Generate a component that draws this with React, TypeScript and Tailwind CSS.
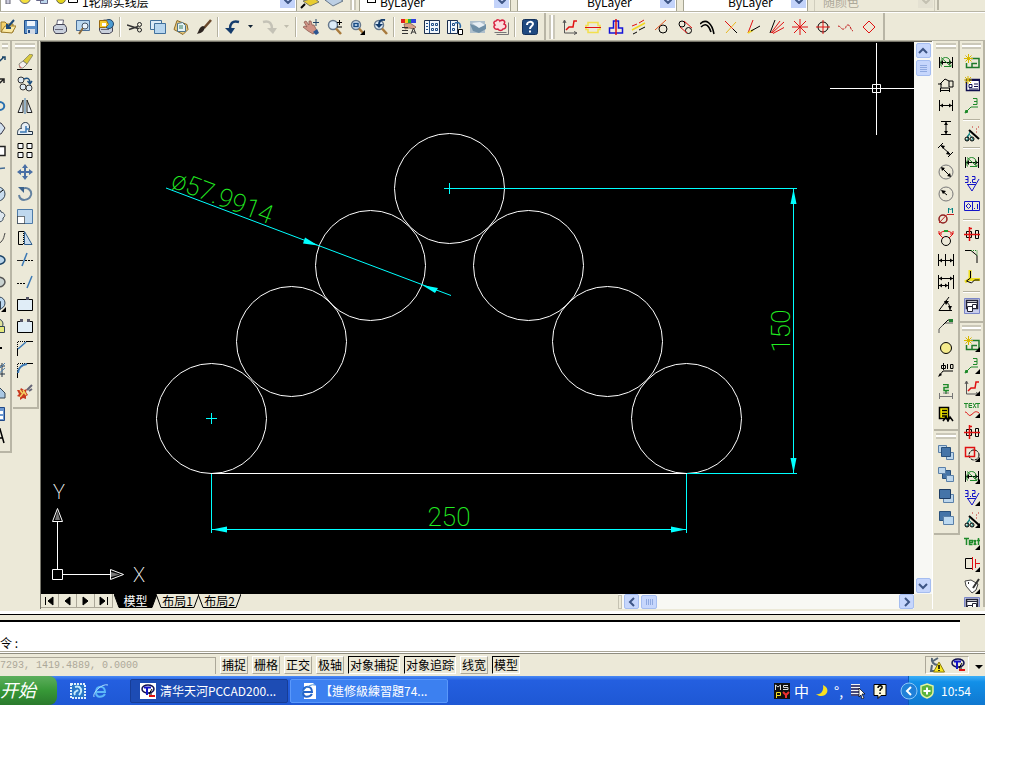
import type { ReactNode } from "react";
import clsx from "clsx";

type PathProps = { d: string; c?: string; f?: string; w?: number; dash?: string };

const P = ({ d, c = "#000", f = "none", w = 1, dash }: PathProps) => (
  <path d={d} stroke={c} fill={f} strokeWidth={w} strokeDasharray={dash} />
);

const CORNER = <path d="M16 11v5h-5z" fill="#000" />;

const DIM_GREEN = (
  <>
    <P d="M1.500 3v11M14.500 3v11M2 8.500h12" />
    <path d="M5 6L2 8.500 5 11zM11 6l3 2.500-3 2.500z" />
    <P d="M3.500 12.500c-2-4 0-9 4-9s6 4 3 7M6 12.500h7v-2M3 3.500l10 9" c="#1e8a2a" />
  </>
);
const ROUGHNESS = (
  <>
    <P d="M3 8.500h9M4 9l4 6 7-12" c="#1414c8" />
    <P d="M1 .5h3v6H1M1.500 3.500H4M6 6.500h1M8 .5h3v3H8.500v3H12" c="#1414c8" />
  </>
);
const WAND = (
  <>
    <P d="M5 4l10 9" w={2} />
    <P d="M6 6l-3 6M5 8l4 5M4 9v6" c="#007a7a" />
    <P d="M1 14h3M7 14h3" c="#007a7a" />
    <P d="M8 1h1M12 3h1M14 1h1M12 6h1" c="#c02020" />
    <circle cx="3" cy="13" r="2" fill="none" stroke="#000" />
    <circle cx="8" cy="13" r="2" fill="none" stroke="#000" />
  </>
);
const BOLT = (
  <>
    <P d="M2.500 5.500h5v6h-5zM11.500 4.500h3v8h-3z" />
    <P d="M0 8.500h16M5.500 1v14M8 2.500H5.500" c="#e01010" w={1.500} />
  </>
);
const LEADER3 = (
  <>
    <P d="M2 14l5-5h7" c="#1e8a2a" />
    <P d="M1 15l3-1-2-2z" f="#1e8a2a" c="#1e8a2a" />
    <P d="M9 .5h4v6H9M10 3.500h3" c="#1e8a2a" />
  </>
);
const NEW_VIEW = (
  <>
    <P d="M7 4.500h8v9H2.500V9M8 13V9.500h5" c="#1e7a2a" w={1.500} />
    <P d="M4.500 0v9M0 4.500h9M1.500 1.500l6 6M7.500 1.500l-6 6" c="#d8b800" />
  </>
);
const AXIS_CURVE = (
  <>
    <P d="M2.500 2v12h12M1 4l1.500-3L4 4M12 12.500l3 1.500-3 1.500" c="#555" />
    <P d="M4 11l3-3h4l1-6h3" c="#e01010" w={1.500} />
  </>
);
const GRID_BOX = (
  <>
    <P d="M0.500 0.500h15v15H.5z" c="#7a86c8" f="#c8cdec" />
    <P d="M2.500 2.500h11v8h-11z" w={1.500} c="#223" f="#fff" />
    <P d="M3 4.500h10" c="#223" />
    <P d="M3.500 8.500h5v5h-5zM8.500 6.500h4v4h-4z" f="#fff" c="#223" />
  </>
);
const MAGNIFIER = (
  <>
    <circle cx="7" cy="6" r="4.500" fill="#dcebf7" stroke="#66788c" strokeWidth="1.500" />
    <P d="M10 9.500l5 5.500" c="#a87a3c" w={2.500} />
  </>
);
const PRINTER = (
  <>
    <P d="M4.500 7l1-6h6l-1 6" f="#fff" c="#667" />
    <P d="M1.500 7.500l3-2h8l2 3v4l-3 2h-8l-2-3z" f="#c9d0dc" c="#445" />
    <P d="M3 10.500h8" c="#667" />
  </>
);

const icons: Record<string, ReactNode> = {
  Open: (
    <>
      <P d="M1 13V3h4l2 2h6v8z" f="#f3d16b" c="#9a7a2a" />
      <P d="M1 13l4-6h11l-4 7z" f="#fbe9a4" c="#9a7a2a" />
      <P d="M14 1L7 9m0-4v4h4" c="#1c4a7a" w={2} />
    </>
  ),
  Save: (
    <>
      <P d="M1.500 1.500h13v13h-13z" f="#5b8fc8" c="#1f4c86" />
      <path d="M4 2h8v5H4z" fill="#eef5fc" />
      <path d="M4 10h8v5H4z" fill="#d2dbe6" />
      <path d="M5 11h2v3H5z" fill="#1f4c86" />
    </>
  ),
  Plot: PRINTER,
  "Plot Preview": (
    <>
      <P d="M1.500 1.500h13v10h-13z" f="#b9d7ee" c="#4a6f98" />
      <circle cx="10" cy="7" r="3" fill="#e8f3fb" stroke="#456" />
      <P d="M8 9l-4 6" c="#8a6a3c" w={2} />
    </>
  ),
  Publish: (
    <>
      {PRINTER}
      <circle cx="11" cy="5" r="4.500" fill="#4c9bd0" stroke="#246" />
      <P d="M1.500 1.500h7l2 4-3 3h-6z" f="#f5c92c" c="#9a6a10" />
      <path d="M4 4h4v3H4z" fill="#fff" />
    </>
  ),
  Cut: (
    <>
      <P d="M0 6l11 3.500M2 10.500l9-3" w={1.500} c="#333" />
      <circle cx="12.500" cy="5.500" r="2" fill="none" stroke="#222" />
      <circle cx="12.500" cy="11" r="2" fill="none" stroke="#222" />
    </>
  ),
  Copy: (
    <>
      <P d="M.5 1.500h11v9H.5z" f="#dcebf7" c="#41719c" />
      <P d="M4.500 4.500h11v10h-11z" f="#b7d6ef" c="#41719c" />
    </>
  ),
  Paste: (
    <>
      <P d="M4 1.500l10 4 1 5-5 5-9-5z" f="#e8c87a" c="#8a6a2a" />
      <P d="M4.500 4.500l5-1 3 3v6h-8z" f="#e5f2f5" c="#4f7388" />
      <P d="M6 7h4M6 9h4" c="#3a8060" />
    </>
  ),
  "Match Properties": (
    <>
      <P d="M15 1L8 9" c="#6b4a2c" w={2.500} />
      <path d="M9 8c-1 5-4 6-8 7 2-3 2-7 6-8z" fill="#2c2420" />
    </>
  ),
  Undo: (
    <>
      <P d="M14 3C7 1 5 5 5 10" c="#143c6c" w={2.500} />
      <path d="M0 9h10l-4 6z" fill="#143c6c" />
    </>
  ),
  Redo: (
    <>
      <P d="M2 3c7-2 9 2 9 7" c="#c4c2b6" w={2.500} />
      <path d="M6 9h10l-4 6z" fill="#c4c2b6" />
    </>
  ),
  Pan: (
    <>
      <path d="M1 3l2-1 3 4V2l2 0 1 4 2 0 3 6-4 3-5-3-5-4 2-1 2 1z" fill="#cf9284" stroke="#825248" strokeWidth=".7" />
      <path d="M10 13l4-3 2 4-3 2z" fill="#2c5590" />
      <P d="M13 0v7M10 3.500h6" c="#246" />
    </>
  ),
  "Zoom Realtime": (
    <>
      {MAGNIFIER}
      <P d="M13.500 1v5M11 3.500h5M11 8h5" />
    </>
  ),
  "Zoom Window": (
    <>
      {MAGNIFIER}
      <P d="M5 4.500h4v3H5z" c="#164a84" w={1.500} />
      {CORNER}
    </>
  ),
  "Zoom Previous": (
    <>
      {MAGNIFIER}
      <P d="M13 1C8 0 7 3 7 6" c="#143c6c" w={2} />
      <path d="M3 5h8L7 9z" fill="#143c6c" />
    </>
  ),
  Properties: (
    <>
      <path d="M0 0h4v4H0z" fill="#e02020" />
      <path d="M4 0h3v4H4z" fill="#f4d020" />
      <path d="M7 0h3v4H7z" fill="#20b040" />
      <path d="M10 0h5v4h-5z" fill="#3040e0" />
      <path d="M3 5l6-1 6 4-2 2-5-1-4 1z" fill="#d8a088" stroke="#604030" strokeWidth=".6" />
      <P d="M1 8.500h6M1 11.500h6M1 14.500h6M10 15l2.500-6 2.500 6M11 13h3" c="#333" />
    </>
  ),
  DesignCenter: (
    <>
      <P d="M.5 1.500h15v13H.5z" f="#f2f7fc" c="#1a2d4c" />
      <P d="M5.500 2v12M2 4.500h2M2 7.500h2M2 10.500h2M7.500 4.500h2v2h-2zM11.500 4.500h2v2h-2zM7.500 9.500h2v2h-2zM11.500 9.500h2v2h-2z" c="#1f4c86" />
    </>
  ),
  "Tool Palettes": (
    <>
      <P d="M.5 1.500h10v13H.5z" f="#f2f7fc" c="#1a2d4c" />
      <P d="M3.500 2v12M5.500 4.500h2v2h-2zM5.500 9.500h2v2h-2z" c="#1f4c86" />
      <P d="M8 4c5-2 6 2 5 5" c="#2a68a8" w={1.500} />
      <P d="M11.500 10.500h4v5h-4z" f="#fff" />
    </>
  ),
  "Sheet Set": (
    <>
      <path d="M0 2h15v12H0z" fill="#aebfcb" />
      <path d="M0 5l9 3 7-3v5l-7 4-6-2z" fill="#6f8fa6" />
      <path d="M2 4l8-1 5 3-6 3z" fill="#e7eef3" />
    </>
  ),
  Markup: (
    <>
      <P d="M3.500 15.500h12v-12M1.500 13.500h12" c="#777" />
      <P d="M3 2c1-2 4-1 4 0 3-2 6 0 4 3 3 1 2 5-1 5-1 2-4 2-5 0-4 1-5-3-3-4-2-2-1-4 1-4z" f="#fbdede" c="#d82040" w={1.500} />
    </>
  ),
  Help: (
    <>
      <rect x=".5" y=".5" width="15" height="15" rx="2" fill="#1f4a80" stroke="#12305a" />
      <P d="M5 6c0-4 6-4 6-1 0 2-3 2-3 5M8 11.500v2" c="#fff" w={2} />
    </>
  ),
  "Axis Curve": AXIS_CURVE,
  "Centre Line": (
    <>
      <P d="M3 3.500h10v3h2v4h-2v3H3v-3H1v-4h2z" c="#f2e04c" w={1.500} />
      <P d="M0 8.500h16" c="#e01010" />
    </>
  ),
  Symmetric: (
    <>
      <P d="M5.500 2v7h-4v5h13V9h-4V2z" c="#1414d8" w={1.500} />
      <P d="M8 0v16" c="#e01010" w={1.500} />
    </>
  ),
  Parallel: (
    <>
      <P d="M1 7l5-2M8 4l5-3" c="#e01010" />
      <P d="M1 11l13-7" c="#f0d820" w={1.500} />
      <P d="M2 15l4-2M8 11l6-3" />
    </>
  ),
  "Tangent Line": (
    <>
      <circle cx="9" cy="10" r="4" fill="none" stroke="#000" />
      <P d="M1 11L12 1" c="#e0501a" />
    </>
  ),
  "Tangent Circles": (
    <>
      <circle cx="5" cy="5" r="3" fill="none" stroke="#000" />
      <circle cx="11.500" cy="11.500" r="3" fill="none" stroke="#000" />
      <P d="M3 8l7 6M7 2l8 7" c="#e01010" />
    </>
  ),
  "Arc Offset": <P d="M0 5c6-6 12-1 14 10M1 8c5-5 8-1 10 5" w={1.500} />,
  "Break Cross": (
    <>
      <P d="M2 2l12 12" c="#e01010" />
      <P d="M13 3L3 14" c="#e8b820" />
      <P d="M10 10l4 4" />
    </>
  ),
  "Angle Bisect": (
    <>
      <P d="M7 1L2 14" c="#e01010" />
      <P d="M2 14l5-3" c="#f0d820" w={2} />
      <P d="M5 12l9-5" />
    </>
  ),
  "Angle Lines": (
    <>
      <P d="M1 14L6 1" />
      <P d="M2 14l9-12M3 14L15 3M4 14.500l11-6" c="#e01010" />
    </>
  ),
  Star: <P d="M8 0v16M0 8h16M2 2l12 12M14 2L2 14" c="#e01010" />,
  "Centre Mark": (
    <>
      <circle cx="8" cy="8" r="5" fill="none" stroke="#000" />
      <P d="M8 1v14M1 8h14" c="#e01010" />
    </>
  ),
  "Wave Break": <P d="M0 7c3 0 3 4 6 3s1-4 4-4 2 5 5 6" c="#c01818" dash="3 1" />,
  Rhombus: <P d="M8 2l6 6-6 6-6-6z" c="#e01010" />,
  Line: <P d="M2 14L14 3M12 3h3v3" c="#1a4468" w={1.500} />,
  Ray: <P d="M2 14L14 3M10 3h4v4" c="#222" w={1.500} />,
  Polyline: <P d="M1 4h8c7 0 7 8 0 8H3" c="#2a70b0" w={2} />,
  Polygon: <P d="M3 3h8l4 5-4 6H3z" f="#d2e0ee" c="#334" />,
  Rectangle: <P d="M1 4.500h14v9H1z" f="#fff" c="#222" w={1.500} />,
  Arc: <P d="M1 13c2-8 8-9 14-9" c="#446c94" w={1.500} />,
  Circle: (
    <>
      <circle cx="8" cy="8" r="7" fill="#c8dcee" stroke="#345" />
      <P d="M8 8l5-4" />
    </>
  ),
  Cloud: <P d="M3 3c3-3 8-2 8 1 4 1 5 4 2 6 1 4-6 5-8 3-5 0-5-5-3-6z" f="#dde7ef" c="#345" />,
  Spline: <P d="M1 5c5-6 5 12 10 7 3-3 3-6 4-9" c="#444" />,
  Ellipse: <ellipse cx="8" cy="8" rx="7" ry="4.500" fill="#b9d4ea" stroke="#1c4468" strokeWidth="1.500" />,
  "Ellipse Arc": <ellipse cx="8" cy="8" rx="7" ry="5" fill="#c9d2d0" stroke="#555" strokeWidth="1.500" />,
  "Insert Block": (
    <>
      <circle cx="9" cy="7" r="6" fill="#bcd7ee" stroke="#345" />
      <P d="M2.500 5.500h8v8h-8z" f="#dce8f2" c="#345" />
      {CORNER}
    </>
  ),
  "Make Block": (
    <>
      <circle cx="8" cy="6" r="5" fill="#dfe29a" stroke="#345" />
      <P d="M6.500 8.500h8v6h-8z" f="#e4e87c" c="#345" />
    </>
  ),
  Point: <path d="M10 7h2v2h-2z" fill="#000" />,
  Hatch: (
    <>
      <P d="M1 4h14M1 12h14M12 1v14" c="#234" />
      <P d="M1 15L15 1M5 15L15 6M1 9l8-8" c="#4a80b4" />
    </>
  ),
  Region: <P d="M1 14V7l6-6 8 8v5z" f="#a9c7e2" c="#345" />,
  Table: (
    <>
      <P d="M1.500 1.500h13v13h-13z" f="#6c98d0" c="#224a8a" />
      <path d="M3 5h4v3H3zM9 5h4v3H9zM3 10h4v3H3zM9 10h4v3H9z" fill="#fff" />
    </>
  ),
  "Multiline Text": <P d="M4 15L10 1l4 14M7 10h6" w={1.500} />,
  Erase: (
    <>
      <P d="M0 15.500h15" />
      <path d="M6 7l7-7 3 1-6 9z" fill="#d8c83c" stroke="#665" strokeWidth=".6" />
      <path d="M2 10l4-3 4 3-4 4H3z" fill="#f4f0ec" stroke="#665" strokeWidth=".7" />
      <path d="M2 11l3 3H3z" fill="#e07070" />
    </>
  ),
  "Copy Object": (
    <>
      <circle cx="4" cy="4" r="3" fill="#dce8f2" stroke="#333" />
      <circle cx="6" cy="11" r="3" fill="#dce8f2" stroke="#333" />
      <circle cx="12" cy="12" r="3" fill="#dce8f2" stroke="#333" />
      <P d="M7 3c4-2 6 0 6 4M10.500 5l2.500 3 2-3" c="#1c4f80" w={1.500} />
    </>
  ),
  Mirror: (
    <>
      <P d="M6 2v12.500H1zM10 2v12.500h5z" f="#e6eef5" c="#222" />
      <P d="M8 0v16" c="#3a78b4" w={1} />
    </>
  ),
  Offset: (
    <>
      <P d="M.5 14.500h15v-3h-4c2-4 1-9-3-9s-5 4-4 6c-4 0-4 3-4 6z" f="#e6eef5" c="#234" />
      <P d="M3 12h6V6M9 9h3" c="#3a78b4" w={1.500} />
    </>
  ),
  Array: <P d="M1 1.500h5v5H1zM10 1.500h5v5h-5zM1 10.500h5v5H1zM10 10.500h5v5h-5z" f="#f4f8fb" />,
  Move: (
    <>
      <P d="M8 2v12M2 8h12" c="#4a6fa5" w={2} />
      <path d="M8 0l3 4H5zM8 16l3-4H5zM0 8l4-3v6zM16 8l-4-3v6z" fill="#4a6fa5" />
    </>
  ),
  Rotate: (
    <>
      <P d="M5 3c6-3 10 2 9 6-2 6-11 7-12 0" c="#6482a0" w={2} />
      <path d="M1 1h6v6z" fill="#3b628c" />
    </>
  ),
  Scale: (
    <>
      <P d="M.5 1.500h15v14H.5z" f="#bfd8ee" c="#4e7ba8" />
      <P d="M.5 8.500h7v7h-7z" f="#fff" dash="1 1" />
    </>
  ),
  Stretch: (
    <>
      <P d="M6 1.500H1.500v13H6" />
      <P d="M6.500 1v14" dash="1 1" />
      <P d="M7.500 1.500L15 14.500H7.500z" f="#c9ddef" c="#2d5c8c" />
    </>
  ),
  Trim: (
    <>
      <P d="M0 8.500h6" c="#222" />
      <P d="M8 8.500h8" dash="2 1" />
      <P d="M10 1L5 14" c="#3a78b4" w={1.500} />
    </>
  ),
  Extend: (
    <>
      <P d="M0 9.500h9" dash="2 1" />
      <P d="M15 2l-5 12" c="#3a78b4" w={1.500} />
    </>
  ),
  "Break at Point": (
    <>
      <P d="M.5 3.500h15v11H.5z" f="#e0edf7" />
      <path d="M9 1h3v3H9z" fill="#556" />
    </>
  ),
  Break: (
    <>
      <P d="M3 3.500H.5v11h15v-11H13" f="#e0edf7" />
      <path d="M3 1h3v3H3zM10 1h3v3h-3z" fill="#556" />
    </>
  ),
  Chamfer: (
    <>
      <P d="M.5 16V9M9 1.500h7" />
      <P d="M.5 9V1.500H9" dash="1 1" />
      <P d="M1 9l8-7" c="#3a78b4" w={1.500} />
    </>
  ),
  Fillet: (
    <>
      <P d="M.5 16V9M9 1.500h7" />
      <P d="M.5 9V1.500H9" dash="1 1" />
      <P d="M1 11c0-6 4-8 9-9" c="#3a78b4" w={2} />
    </>
  ),
  Explode: (
    <>
      <path d="M0 6l3 0 1-2 3 2 3-1-1 3 2 3-2 1 0 3-3-1-3 2 0-3-3-1 2-2z" fill="#c83820" />
      <P d="M3 6l2 3M7 8l-4 5M6 6l3 5" c="#f4d060" w={1.500} />
      <P d="M10 6l5-5M12 7l3-2" c="#667" w={2} />
    </>
  ),
  "Smart Dimension": DIM_GREEN,
  "Polygon Dimension": (
    <>
      <P d="M2 8l5-5 4 2h4v6h-4V5M3 8v4h8M0 8h4" />
      <P d="M3 14.500h8M2.500 12v4M11.500 12v4" />
    </>
  ),
  Horizontal: (
    <>
      <P d="M1.500 2v11M14.500 2v11M2 7.500h12" />
      <path d="M2 7.500l3-2v4zM14 7.500l-3-2v4z" />
    </>
  ),
  Vertical: (
    <>
      <P d="M3 1.500h10M3 14.500h10M8 2v12" />
      <path d="M8 2l2 3H6zM8 14l2-3H6z" />
    </>
  ),
  Aligned: (
    <>
      <P d="M0 6l5-5M10 15l5-5M3 4l9 8" />
      <path d="M3 3l4 1-2 3zM12 13l-4-1 2-3z" />
    </>
  ),
  Diameter: (
    <>
      <circle cx="8" cy="8" r="7" fill="none" stroke="#777" />
      <P d="M4 4l8 8" />
      <path d="M3 3l4 1-3 3zM13 13l-4-1 3-3z" />
    </>
  ),
  Radius: (
    <>
      <circle cx="8" cy="8" r="7" fill="none" stroke="#777" />
      <P d="M4 5l5 4" />
      <path d="M3 4l5 1-3 3z" />
    </>
  ),
  "Thread Dimension": (
    <>
      <circle cx="5" cy="11" r="4" fill="none" stroke="#902020" strokeWidth="1.500" />
      <P d="M1 15L9 6.500h7" c="#c02020" />
      <P d="M10.500 5V0l2 2 2-2v5" c="#008080" />
    </>
  ),
  "Arc Length": (
    <>
      <circle cx="8" cy="11" r="4.500" fill="none" stroke="#000" />
      <P d="M1 4c4-4 10-4 14 0M1 4l4 4M15 4l-4 4M1 1v3h3M15 1v3h-3" c="#e01010" />
      <path d="M6 0h4v2H6z" fill="#20a030" />
    </>
  ),
  Continue: (
    <>
      <P d="M.5 2v12M7.500 2v12M15.500 2v12M0 8.500h16" />
      <path d="M1 8.500l3-2v4zM15 8.500l-3-2v4z" />
    </>
  ),
  Baseline: (
    <>
      <P d="M.5 1v14M15.500 1v14M10.500 8v7M1 4.500h14M1 11.500h9" />
      <path d="M1 4.500l3-2v4zM15 4.500l-3-2v4zM1 11.500l3-2v4zM10 11.500l-3-2v4z" />
    </>
  ),
  Angular: (
    <>
      <P d="M14 14.500H1L11 1M7 5c4 2 5 5 5 9" />
      <path d="M6 5l5 0-3 4zM12 14l-2-4h4z" />
    </>
  ),
  "Chamfer Dimension": (
    <>
      <P d="M1 15v-4l6-6h8" c="#555" />
      <P d="M5 7l5-5h5" />
      <path d="M11 1h4v3h-4z" fill="#208030" />
    </>
  ),
  Balloon: <circle cx="8" cy="8" r="5.500" fill="#f5eb8c" stroke="#000" />,
  "Hole Dimension": (
    <>
      <P d="M1 14l4-5h10M5.500 1v7M3.500 3.500h4v3h-4zM9.500 2v5M12.500 2.500h2.500v4h-2.500z" />
      <path d="M0 15l2-4 2 2z" />
    </>
  ),
  "Datum Two": (
    <>
      <P d="M5 .5h5v3H6v3h5M8 7v3" c="#1e8a2a" w={1.500} />
      <P d="M1.500 9v6M14.500 9v6M2 12.500h12M5 9h6" c="#777" />
    </>
  ),
  "Edit Table": (
    <>
      <P d="M1.500 1.500h9v11h-9z" f="#f4e800" w={1.500} />
      <P d="M4 4.500h5M4 7.500h5M4 10h5M5 15l3-4 2 4 2-4 3 4" w={1.500} />
    </>
  ),
  "New View": NEW_VIEW,
  "New Sheet": (
    <>
      <P d="M2.500 3.500h13v11h-13z" f="#fff" c="#101050" w={1.500} />
      <P d="M3 4.500h12M5 8.500h3v3H5zM10 8h4M10 10.500h4M5 13h9" c="#101050" />
      <P d="M4 0v8M0 4h8M1 1l6 6M7 1L1 7" c="#d8b800" />
    </>
  ),
  Leader: LEADER3,
  Wizard: WAND,
  Roughness: ROUGHNESS,
  Tolerance: (
    <>
      <P d="M.5 3.500h15v9H.5zM8.500 4v8M13.500 6v5M10 10.500h1" c="#1414c8" />
      <P d="M4.500 5.500L7 8l-2.500 2.500L2 8z" c="#1414c8" />
    </>
  ),
  Bolt: BOLT,
  "Corner Fillet": (
    <>
      <P d="M1 2.500h6l6 5V15" />
      <P d="M7 2.500h6v5" c="#1e8a2a" dash="1 1" />
    </>
  ),
  "Corner Edge": (
    <>
      <P d="M6 0v9l-5 3M6 9.500h10" c="#f0e020" w={3} />
      <P d="M6.500 1v7l-4 3 5 2 3-3h5" />
    </>
  ),
  "Block Library": GRID_BOX,
  "View Flyout": <>{NEW_VIEW}{CORNER}</>,
  "Leader Flyout": <>{LEADER3}{CORNER}</>,
  "Curve Flyout": <>{AXIS_CURVE}{CORNER}</>,
  "Text Curve": (
    <>
      <P d="M0 1.500h4M2 2v4M8 1.500H5v4h3M5 3.500h3M9 1l3 5M12 1L9 6M12 1.500h4M14 2v4" c="#1e8a2a" />
      <P d="M1 10c3 0 3 5 6 3s4-5 8-2" c="#e01010" />
      {CORNER}
    </>
  ),
  "Shape Flyout": (
    <>
      <circle cx="10" cy="9" r="5" fill="none" stroke="#000" strokeDasharray="3 1" />
      <P d="M1.500 1.500h9v9h-9z" c="#e01010" w={1.500} />
      {CORNER}
    </>
  ),
  "Dimension Flyout": <>{DIM_GREEN}{CORNER}</>,
  "Roughness Flyout": <>{ROUGHNESS}{CORNER}</>,
  "Wizard Flyout": <>{WAND}{CORNER}</>,
  "Text Flyout": (
    <>
      <P d="M0 4.500h5M2.500 5v6M5.500 8.500h3v-2h-3v4h3M10 6l2 5M12 6l-2 5M14.500 4v7M13 6.500h3" c="#1e8a2a" w={1.500} />
      {CORNER}
    </>
  ),
  "Shaft Flyout": (
    <>
      <P d="M8.500 2.500h-7v10h7" />
      <P d="M8.500 1v13M11.500 3v9M12 7.500h4" c="#e01010" />
      {CORNER}
    </>
  ),
  "Tag Flyout": (
    <>
      <P d="M1 3l6-1 7 4-2 6-4 3-6-7z" f="#fff" c="#444" />
      <P d="M15 1l-6 9M4 5h1" w={2} c="#333" />
      {CORNER}
    </>
  ),
  "Library Flyout": GRID_BOX,
  "Bring to Front": (
    <>
      <P d="M.5 1.500h8v7h-8zM8.500 8.500h7v7h-7z" f="#bcd6ec" c="#5a80a8" />
      <P d="M3.500 3.500h9v9h-9z" f="#4474a8" c="#28507c" />
    </>
  ),
  "Send to Back": (
    <>
      <P d="M4.500 4.500h8v8h-8z" f="#4474a8" c="#28507c" />
      <P d="M.5 1.500h7v6h-7zM8.500 9.500h7v6h-7z" f="#bcd6ec" c="#5a80a8" />
    </>
  ),
  "Bring Above": (
    <>
      <P d="M5.500 6.500h10v8h-10z" f="#bcd6ec" c="#5a80a8" />
      <P d="M1.500 1.500h11v9h-11z" f="#4474a8" c="#1c3c64" />
    </>
  ),
  "Send Under": (
    <>
      <P d="M1.500 1.500h11v9h-11z" f="#4474a8" c="#28507c" />
      <P d="M5.500 6.500h10v8h-10z" f="#bcd9f0" c="#5a80a8" />
    </>
  ),
};

const STANDARD = [
  "Open", "Save", "|", "Plot", "Plot Preview", "Publish", "|", "Cut", "Copy", "Paste", "Match Properties", "|",
  "Undo", "v", "Redo", "w", "|", "Pan", "Zoom Realtime", "Zoom Window", "Zoom Previous", "|",
  "Properties", "DesignCenter", "Tool Palettes", "Sheet Set", "Markup", "|", "Help",
];
const CONSTRUCT = [
  "Axis Curve", "Centre Line", "Symmetric", "Parallel", "Tangent Line", "Tangent Circles", "Arc Offset",
  "Break Cross", "Angle Bisect", "Angle Lines", "Star", "Centre Mark", "Wave Break", "Rhombus",
];
const DRAW = [
  "Line", "Ray", "Polyline", "Polygon", "Rectangle", "Arc", "Circle", "Cloud", "Spline", "Ellipse",
  "Ellipse Arc", "Insert Block", "Make Block", "Point", "Hatch", "Region", "Table", "Multiline Text",
];
const MODIFY = [
  "Erase", "Copy Object", "Mirror", "Offset", "Array", "Move", "Rotate", "Scale", "Stretch", "Trim", "Extend",
  "Break at Point", "Break", "Chamfer", "Fillet", "Explode",
];
const DIMENSION = [
  "Smart Dimension", "Polygon Dimension", "Horizontal", "Vertical", "Aligned", "Diameter", "Radius",
  "Thread Dimension", "Arc Length", "Continue", "Baseline", "Angular", "Chamfer Dimension", "Balloon",
  "Hole Dimension", "Datum Two", "Edit Table",
];
const ORDER = ["Bring to Front", "Send to Back", "Bring Above", "Send Under"];
const MECHANICAL = [
  "New View", "New Sheet", "Leader", "|", "Wizard", "|", "Smart Dimension", "Roughness", "Tolerance", "|",
  "Bolt", "Corner Fillet", "Corner Edge", "|", "Block Library",
];
const FLYOUTS = [
  "View Flyout", "Leader Flyout", "Curve Flyout", "Text Curve", "Bolt", "Shape Flyout", "Dimension Flyout",
  "Roughness Flyout", "Wizard Flyout", "Text Flyout", "Shaft Flyout", "Tag Flyout", "Library Flyout",
];

function Svg({ children }: { children: ReactNode }) {
  return <svg viewBox="0 0 16 16" className="block h-4 w-4 shrink-0">{children}</svg>;
}

function ToolButton({ name, className }: { name: string; className: string }) {
  return (
    <button type="button" aria-label={name} className={clsx("flex shrink-0 items-center", className)}>
      <Svg>{icons[name]}</Svg>
    </button>
  );
}

function HorizontalTools({ items }: { items: string[] }) {
  return (
    <>
      {items.map((name, i) => {
        if (name === "|")
          return <div key={i} className="mx-[2px] h-5 w-[2px] shrink-0 border-l border-[#b5b2a0] border-r border-r-white" />;
        if (name === "v" || name === "w")
          return (
            <button key={i} type="button" aria-label="History" className="flex w-[13px] shrink-0 justify-center">
              <svg viewBox="0 0 5 3" className="h-[3px] w-[5px]">
                <path d="M0 0h5L2.500 3z" fill={name === "v" ? "#123" : "#c0bdae"} />
              </svg>
            </button>
          );
        return <ToolButton key={i} name={name} className="h-6 w-[23px] justify-center" />;
      })}
    </>
  );
}

function VerticalBar({ items, clip, open }: { items: string[]; clip?: boolean; open?: boolean }) {
  return (
    <div className={clsx("flex flex-col overflow-hidden border-r-2 border-[#b8b5a5] pt-[2px]", !open && "border-b-2 pb-[4px]")}>
      <div className="mx-[2px] mb-[2px] h-[6px] border-y-2 border-[#cbc8b9] bg-white" />
      {items.map((name, i) =>
        name === "|" ? (
          <div key={i} className="mx-[3px] my-[2px] h-[2px] border-b border-white bg-[#b5b2a0]" />
        ) : (
          <ToolButton
            key={i}
            name={name}
            className={clsx(
              open && i === items.length - 1 ? "h-[10px] items-start overflow-hidden" : "h-[22px]",
              clip ? "justify-end pr-[4px]" : "justify-center"
            )}
          />
        )
      )}
    </div>
  );
}

function Chevron({ dir }: { dir: "up" | "down" | "left" | "right" }) {
  const d = { up: "M1 7l4-4 4 4", down: "M1 3l4 4 4-4", left: "M7 1L3 5l4 4", right: "M3 1l4 4-4 4" }[dir];
  return (
    <svg viewBox="0 0 10 10" className="h-[10px] w-[10px]">
      <path d={d} fill="none" stroke="#3d5585" strokeWidth="2" />
    </svg>
  );
}

function ScrollButton({ dir }: { dir: "up" | "down" | "left" | "right" }) {
  return (
    <button
      type="button"
      aria-label={`Scroll ${dir}`}
      className="flex h-[15px] w-[15px] shrink-0 items-center justify-center rounded-[2px] border border-[#a5bdf0] bg-[#c6d6fc]"
    >
      <Chevron dir={dir} />
    </button>
  );
}

function Combo({ label, value, className, pad, disabled }: {
  label: string;
  value: string;
  className: string;
  pad: string;
  disabled?: boolean;
}) {
  return (
    <div className={clsx("relative h-[22px] shrink-0", className)}>
      <select
        aria-label={label}
        disabled={disabled}
        className={clsx(
          "h-full w-full appearance-none border pb-1 text-xs opacity-100",
          pad,
          disabled ? "border-[#d0cdbd] bg-[#ece9d8] text-[#aca899]" : "border-[#a5a492] bg-white text-black"
        )}
      >
        <option>{value}</option>
      </select>
      <div
        className={clsx(
          "pointer-events-none absolute right-[2px] bottom-[2px] flex h-[18px] w-[15px] items-end justify-center pb-1",
          disabled ? "bg-[#e4e1d2]" : "bg-[#c3d3fa]"
        )}
      >
        <svg viewBox="0 0 8 5" className="h-[5px] w-2">
          <path d="M0 0l4 4 4-4" fill="none" stroke={disabled ? "#c4c1b2" : "#3d5585"} strokeWidth="2" />
        </svg>
      </div>
    </div>
  );
}

const Grip = () => <div className="mx-[3px] h-6 w-[6px] shrink-0 border-x-2 border-[#cbc8b9] bg-white" />;

function PropertiesRow() {
  return (
    <div className="flex h-3 items-end overflow-hidden border-b border-[#b8b5a5] pb-[1px]">
      <div className="relative flex shrink-0">
        <Combo label="Layer" value="1轮廓实线层" className="w-[297px]" pad="pl-[81px]" />
        <svg viewBox="0 0 80 12" className="absolute bottom-[6px] left-0 h-3 w-20">
          <P d="M6 12V7h4v5z" c="#667" f="#ccd" />
          <circle cx="25" cy="6" r="5.500" fill="#f5e03c" stroke="#667" />
          <P d="M36.500 2.500h7v6h-7zM40.500 5.500h7v6h-7z" c="#668" f="#bcd6ec" />
          <circle cx="61" cy="7" r="4.500" fill="#e4d41c" stroke="#665" />
          <P d="M68.500 1.500h9v9h-9z" f="#fff" />
        </svg>
      </div>
      <svg viewBox="0 0 50 10" className="h-[10px] w-[50px] shrink-0">
        <P d="M6 1l7 5 9-4-5-4z" f="#e8cc30" c="#776" />
        <P d="M4 8l4-4" w={2} />
        <P d="M28 0l8 6 10-5-6-4z" f="#bccfe4" c="#678" />
      </svg>
      <Grip />
      <div className="relative flex shrink-0">
        <Combo label="Color" value="ByLayer" className="w-[152px]" pad="pl-[20px]" />
        <div className="pointer-events-none absolute bottom-[7px] left-[8px] h-[9px] w-[9px] border border-black" />
      </div>
      <div className="flex min-w-0 gap-[6px] border-r-2 border-[#b8b5a5] pr-[2px] pl-[6px]">
        <Combo label="Linetype" value="ByLayer" className="w-[160px]" pad="pl-[69px]" />
        <Combo label="Lineweight" value="ByLayer" className="w-[125px]" pad="pl-[44px]" />
        <Combo label="Plot style" value="随颜色" className="w-[121px]" pad="pl-2" disabled />
      </div>
    </div>
  );
}

const CIRCLES = [[449, 188], [370, 265], [291, 341], [211, 418], [528, 265], [607, 341], [686, 418]];

function Drawing() {
  return (
    <svg viewBox="41 42 873 552" className="block w-full bg-black">
      <g fill="none" stroke="#fff">
        {CIRCLES.map(([x, y]) => (
          <circle key={x} cx={x + 0.5} cy={y + 0.5} r="55" />
        ))}
        <path d="M211 473.500h476M876.500 43v92M830 88.500h84M872.500 84.500h8v8h-8z" />
        <path d="M52.500 569.500h10v10h-10zM57.500 569v-48M52.500 521.500h10l-5-13zM63 574.500h47M110.500 569.500v10l13-5z" />
      </g>
      <path d="M55 520l2.500-9 2.500 9zM111 572l9 2.500-9 2.500z" fill="#777" />
      <g fill="none" stroke="#00ffff">
        <path d="M444 188.500h353M449.500 183v11M687 473.500h110M793.500 189v284M206 418.500h11M211.500 413v11" />
        <path d="M211.500 474v59M686.500 474v59M212 529.500h474M166 188l285 107.500" />
      </g>
      <path
        d="M793.500 189l-3 15h6zM793.500 473l-3-15h6zM212 529.500l15-3v6zM686 529.500l-15-3v6zM318 245.500l-13-8-2 6zM422 285l16 3-3 5z"
        fill="#00ffff"
      />
      <g className="font-['Roboto'] font-extralight" fill="#22ee22" fontSize="26">
        <text x="449" y="526" textAnchor="middle">250</text>
        <text transform="translate(790 331) rotate(-90)" textAnchor="middle">150</text>
        <text transform="translate(170 187) rotate(20.600)">ø57.9914</text>
      </g>
      <g className="font-['Roboto'] font-extralight" fill="#fff" fontSize="20" textAnchor="middle">
        <text x="59" y="499">Y</text>
        <text x="139" y="582">X</text>
      </g>
    </svg>
  );
}

function LayoutTab({ name, active }: { name: string; active?: boolean }) {
  return (
    <button type="button" className={clsx("relative -ml-[1px] h-[14px] w-[43px] text-xs leading-3", active ? "text-white" : "text-black")}>
      <svg viewBox="0 0 43 14" className="absolute inset-0 h-full w-full">
        <path d="M0 0l5 13.500h33L43 0" fill={active ? "#000" : "#ece9d8"} stroke="#000" />
      </svg>
      <span className="relative">{name}</span>
    </button>
  );
}

const NAV = ["M3.500 2v8M11 2v8L6 6z", "M10 2v8L5 6z", "M5 2v8l5-4z", "M4 2v8l5-4zM11.500 2v8"];

function LayoutStrip() {
  return (
    <div className="flex h-[15px] items-start">
      {NAV.map((d) => (
        <button key={d} type="button" aria-label="Layout navigation" className="flex h-[14px] w-[18px] items-center justify-center border-r border-b border-[#aca899]">
          <svg viewBox="0 0 15 12" className="h-3 w-[15px]">
            <path d={d} stroke="#000" />
          </svg>
        </button>
      ))}
      <div className="ml-[2px] flex">
        <LayoutTab name="模型" active />
        <LayoutTab name="布局1" />
        <LayoutTab name="布局2" />
      </div>
      <div className="ml-auto flex w-[34%] max-w-[296px] items-center bg-[#f8f8f4]">
        <div className="mr-[2px] h-[14px] w-1 border border-[#c5c2b2] bg-[#ece9d8]" />
        <ScrollButton dir="left" />
        <div className="ml-[2px] flex h-[14px] w-4 items-center justify-center gap-[1px] rounded-[2px] border border-[#a5bdf0] bg-[#c6d6fc]">
          <i className="h-[6px] w-[1px] bg-[#8fa9e0]" />
          <i className="h-[6px] w-[1px] bg-[#8fa9e0]" />
          <i className="h-[6px] w-[1px] bg-[#8fa9e0]" />
          <i className="h-[6px] w-[1px] bg-[#8fa9e0]" />
        </div>
        <div className="flex-1" />
        <ScrollButton dir="right" />
      </div>
    </div>
  );
}

function Workspace() {
  return (
    <div className="flex items-stretch">
      <div className="flex w-10 shrink-0 items-start">
        <div className="w-3">
          <VerticalBar items={DRAW} clip />
        </div>
        <div className="ml-[1px] w-[26px]">
          <VerticalBar items={MODIFY} />
        </div>
      </div>
      <div className="flex min-w-0 flex-1 border-t border-l border-[#77756a]">
        <div className="min-w-0 flex-1">
          <Drawing />
          <LayoutStrip />
        </div>
        <div className="mb-[15px] flex w-[18px] shrink-0 flex-col items-center bg-[#f8f8f4] py-[1px]">
          <ScrollButton dir="up" />
          <div className="mt-[2px] flex h-4 w-[15px] flex-col items-center justify-center gap-[1px] rounded-[2px] border border-[#a5bdf0] bg-[#c6d6fc]">
            <i className="h-[1px] w-[7px] bg-[#8fa9e0]" />
            <i className="h-[1px] w-[7px] bg-[#8fa9e0]" />
            <i className="h-[1px] w-[7px] bg-[#8fa9e0]" />
            <i className="h-[1px] w-[7px] bg-[#8fa9e0]" />
          </div>
          <div className="flex-1" />
          <ScrollButton dir="down" />
        </div>
      </div>
      <div className="flex w-[53px] shrink-0 border-l border-white">
        <div className="ml-[1px] w-[26px]">
          <VerticalBar items={DIMENSION} />
          <VerticalBar items={ORDER} />
        </div>
        <div className="w-[25px]">
          <VerticalBar items={MECHANICAL} />
          <VerticalBar items={FLYOUTS} open />
        </div>
      </div>
    </div>
  );
}

const MODES: { name: string; on?: boolean }[] = [
  { name: "捕捉" },
  { name: "栅格" },
  { name: "正交" },
  { name: "极轴" },
  { name: "对象捕捉", on: true },
  { name: "对象追踪", on: true },
  { name: "线宽" },
  { name: "模型", on: true },
];

const CadLogo = (
  <>
    <ellipse cx="8" cy="6" rx="6" ry="4" fill="none" stroke="#101050" strokeWidth="1.500" />
    <P d="M7 4v8M4 4.500h7" c="#1414c8" w={2} />
    <P d="M12 6l-3 5h3" />
    <P d="M9 13h6" c="#e01010" w={2} />
  </>
);

function StatusBar() {
  return (
    <div className="flex h-[23px] items-center gap-1 border-t border-[#8f8d80]">
      <div className="flex h-[17px] w-[216px] items-center border-t border-r border-[#aca899] font-['Liberation_Mono'] text-[10px] whitespace-pre text-[#aca899]">
        7293, 1419.4889, 0.0000
      </div>
      {MODES.map((m) => (
        <button
          key={m.name}
          type="button"
          aria-pressed={!!m.on}
          className={clsx(
            "h-[18px] shrink-0 border text-xs leading-4 whitespace-nowrap text-black",
            m.name.length > 2 ? "w-[52px]" : "w-7",
            m.on ? "border-t-black border-r-white border-b-white border-l-black" : "border-t-white border-r-[#aca899] border-b-[#aca899] border-l-white"
          )}
        >
          {m.name}
        </button>
      ))}
      <div className="ml-auto flex h-[18px] w-11 items-center justify-around border border-[#aca899] border-r-white border-b-white">
        <Svg>
          <P d="M3 1c-1 4 2 7 6 7M4 4l5-3M3 8l-1 6h5" c="#567" w={2} />
          <P d="M10 5l5.500 10h-11z" f="#f8e820" c="#8a7a10" />
          <P d="M10 8v4M10 13v1" w={1.500} />
        </Svg>
        <Svg>{CadLogo}</Svg>
      </div>
      <button type="button" aria-label="Status bar menu" className="flex w-3 items-center justify-center pt-1">
        <svg viewBox="0 0 8 4" className="h-1 w-2"><path d="M0 0h8L4 4z" /></svg>
      </button>
    </div>
  );
}

const IeGlyph = ({ light }: { light?: boolean }) => (
  <Svg>
    {!light && <path d="M4 0h9l3 3v13H4z" fill="#fff" />}
    <P d="M3 9h9c0-7-9-7-9 0s7 5 9 2" c={light ? "#5cb8f8" : "#2464c8"} w={2} />
    <P d="M1 14C-1 10 9 0 15 2" c={light ? "#a8dcfc" : "#4a90d8"} />
  </Svg>
);

function Taskbar() {
  return (
    <div className="flex h-[29px] items-center bg-linear-to-b from-[#4a8af5] via-[#245fe0] via-15% to-[#1e58d4] text-xs text-white">
      <button
        type="button"
        className="h-full w-[57px] shrink-0 rounded-r-lg bg-linear-to-b from-[#5cae5c] via-[#379837] to-[#2a7a2c] pb-1 text-left text-lg leading-6 italic"
      >
        开始
      </button>
      <div className="ml-[13px] flex gap-[7px]">
        <Svg>
          <P d="M1 1h14v14H1z" c="#dff0fc" f="#2878c8" w={2} dash="2 1" />
          <P d="M5 4c6-2 8 4 4 8M5 12c-2-3 2-4 3-5" c="#c4ecfc" w={2} />
        </Svg>
        <IeGlyph light />
      </div>
      <button type="button" className="ml-[21px] flex h-6 w-[158px] min-w-0 items-center gap-1 rounded-[2px] border border-[#173d96] bg-[#1d4cb4] pl-[9px] whitespace-nowrap">
        <Svg>
          <path d="M0 0h16v16H0z" fill="#fff" />
          {CadLogo}
        </Svg>
        清华天河PCCAD200...
      </button>
      <button type="button" className="ml-[2px] flex h-6 w-[158px] min-w-0 items-center gap-1 rounded-[2px] border border-[#5a98fa] bg-[#3c80f0] pl-[9px] font-['Noto_Sans_CJK_TC',sans-serif] whitespace-nowrap">
        <IeGlyph />
        <span>【進修級練習題74...</span>
      </button>
      <div className="ml-auto flex h-full items-center">
        <Svg>
          <path d="M0 0h16v16H0z" fill="#111" />
          <P d="M1.500 7V2L4 4l2.500-2v5M14 2.500H9.500v2H14v2H9" c="#ddd" />
          <P d="M2.500 15V9.500h4v3h-4" c="#f4e020" />
          <P d="M9 9l3 3 3-3M12 12v3" c="#f03030" w={2} />
        </Svg>
        <span className="ml-1 text-[15px]">中</span>
        <span className="ml-[5px]">
          <Svg><path d="M9 2c5 2 6 7 2 10-3 2-7 1-9-1 5 1 8-3 7-9z" fill="#f8e020" /></Svg>
        </span>
        <span className="ml-1 w-4 text-sm">°,</span>
        <Svg>
          <path d="M1 1h9v12H1z" fill="#f4f4f4" />
          <P d="M1 3h9M1 6h9M1 9h9M1 12h9" c="#101050" w={1.500} />
          <path d="M9 5l6 6h-3l2 4-2 1-1-4-2 2z" fill="#fff" stroke="#000" strokeWidth=".7" />
        </Svg>
        <span className="ml-[6px]">
          <Svg>
            <P d="M2 1.500h12v11H9l-3 3v-3H2z" f="#fcfadc" />
            <P d="M6 5c0-3 5-3 4 0-1 1-2 1-2 3M8 9.500v1.500" w={1.500} />
          </Svg>
        </span>
        <div className="ml-5 flex h-full w-[77px] items-center border-l border-[#0c59b9] bg-linear-to-b from-[#3cb0f8] via-[#1290e8] via-20% to-[#1078d0]">
          <button type="button" aria-label="Show hidden icons" className="-ml-[9px] shrink-0">
            <svg viewBox="0 0 18 18" className="h-[18px] w-[18px]">
              <circle cx="9" cy="9" r="8" fill="#2080d8" stroke="#8cc8f8" />
              <P d="M11 5L7 9l4 4" c="#fff" w={2} />
            </svg>
          </button>
          <span className="ml-[1px]">
            <Svg>
              <P d="M8 1l6 2v6c0 3-3 5-6 6-3-1-6-3-6-6V3z" f="#5cb43c" c="#e4f4a0" w={1.500} />
              <P d="M8 4.500v7M4.500 8h7" c="#fff" w={2} />
            </Svg>
          </span>
          <span className="ml-[6px]">10:54</span>
        </div>
      </div>
    </div>
  );
}

export default function App() {
  return (
    <div className="min-h-screen overflow-hidden bg-white pr-[39px] font-['Noto_Sans_CJK_SC',sans-serif]">
      <div className="bg-[#ece9d8]">
        <PropertiesRow />
        <div className="flex h-[29px] overflow-hidden border-t border-b border-t-white border-b-[#b8b5a5]">
          <div className="-ml-1 flex shrink-0 items-center border-r-2 border-[#b8b5a5] pr-[3px]">
            <HorizontalTools items={STANDARD} />
          </div>
          <div className="flex min-w-0 items-center border-r-2 border-[#b8b5a5] pr-[3px]">
            <Grip />
            <HorizontalTools items={CONSTRUCT} />
          </div>
        </div>
        <Workspace />
        <div className="mt-[2px] h-[3px] bg-white" />
        <div className="h-[6px] border-t border-black" />
        <label className="mr-[25px] flex h-[31px] items-end border-t-2 border-black bg-white text-xs">
          <span className="shrink-0">令 :</span>
          <input type="text" aria-label="Command" className="min-w-0 flex-1 pl-1 outline-none" />
        </label>
        <div className="h-[2px] border-t border-[#aca899] bg-white" />
        <StatusBar />
        <Taskbar />
      </div>
    </div>
  );
}
